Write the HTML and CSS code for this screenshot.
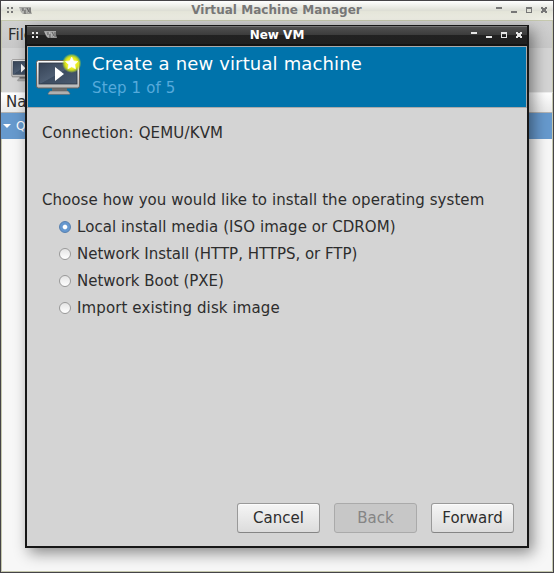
FILE: index.html
```
<!DOCTYPE html>
<html lang="en">
<head>
<meta charset="utf-8">
<title>Virtual Machine Manager</title>
<link rel="stylesheet" href="styles.css">
</head>
<body>
<svg class="defs" width="0" height="0" aria-hidden="true">
  <defs>
    <linearGradient id="bezel" x1="0" y1="0" x2="0" y2="1"><stop offset="0" stop-color="#fff"/><stop offset="1" stop-color="#b8b8b8"/></linearGradient>
    <linearGradient id="screen" x1="0" y1="0" x2="1" y2="1"><stop offset="0" stop-color="#354255"/><stop offset=".5" stop-color="#4e5e73"/><stop offset=".52" stop-color="#3c4c61"/><stop offset="1" stop-color="#4b5b70"/></linearGradient>
    <radialGradient id="glow"><stop offset="0" stop-color="#fff36a"/><stop offset=".6" stop-color="#e8ec15"/><stop offset=".78" stop-color="#c8dc20" stop-opacity=".8"/><stop offset="1" stop-color="#9cca40" stop-opacity="0"/></radialGradient>
    <symbol id="vm" viewBox="0 0 48 44">
      <path d="M17 35h15v3H17z" fill="#6d6d6d"/>
      <path d="M15 38h18l2 2.500q0 1-1 1H14q-1 0-1-1z" fill="#b0b0b0" stroke="#666" stroke-width=".6"/>
      <rect x="1.500" y="7.500" width="43" height="27.500" rx="2" fill="url(#bezel)" stroke="#66625f"/>
      <rect x="4" y="10" width="38" height="21" fill="url(#screen)" stroke="#2d3745" stroke-width=".8"/>
      <path d="M20 14v14l9-7z" fill="#fff"/>
      <circle cx="36.700" cy="10.300" r="9.800" fill="url(#glow)"/>
      <path d="M36.700 4l1.900 3.900 4.300.6-3.100 3 .7 4.300-3.800-2-3.800 2 .7-4.300-3.100-3 4.300-.6z" fill="#fff" stroke="#fff" stroke-width=".6"/>
    </symbol>
    <symbol id="logo" viewBox="0 0 14 8">
      <path d="M0 0h12v4l1 3H4L2 5z" fill="currentColor" opacity=".6"/>
      <path d="M1 1l3 5 1-5 2 5 1-4 2 4 1-3" fill="none" stroke="#ddd" stroke-width=".7" opacity=".5"/>
      <path d="M4 1v3M8 1l2 4M11 1v5M6 3v4" stroke="#555" stroke-width=".9"/>
    </symbol>
    <symbol id="dots" viewBox="0 0 7 6"><path d="M0 0h2v2H0zM4 0h2v2H4zM0 4h2v2H0zM4 4h2v2H4z" fill="currentColor"/></symbol>
    <symbol id="controls" viewBox="0 0 52 7">
      <path d="M0 0h6v2H0zM15 4h6v2h-6zM30 0h6v6h-6zM31 2v3h4V2z" fill="currentColor" fill-rule="evenodd"/>
      <path d="M45 0h2v1h2V0h2v2h-1v2h1v2h-2V5h-2v1h-2V4h1V2h-1z" fill="currentColor"/>
    </symbol>
  </defs>
</svg>
<div class="manager">
  <header class="titlebar">
    <svg class="dots"><use href="#dots"/></svg><svg class="logo"><use href="#logo"/></svg>
    <h1 class="title">Virtual Machine Manager</h1>
    <svg class="controls"><use href="#controls"/></svg>
  </header>
  <nav class="menu">File</nav>
  <div class="toolbar"><svg class="tool-icon"><use href="#vm"/></svg></div>
  <div class="list-head">Name</div>
  <div class="list-row"><svg width="8" height="4"><path d="M0 0h8L4 4z" fill="#fff"/></svg><span>Q</span></div>
  <div class="list-body"></div>
</div>

<section class="dialog">
  <header class="dialog-titlebar">
    <svg class="dots"><use href="#dots"/></svg><svg class="logo"><use href="#logo"/></svg>
    <h2 class="dialog-title">New VM</h2>
    <svg class="controls"><use href="#controls"/></svg>
  </header>
  <div class="banner">
    <svg class="banner-icon"><use href="#vm"/></svg>
    <div><div class="heading">Create a new virtual machine</div><div class="step">Step 1 of 5</div></div>
  </div>
  <div class="content">
    <p class="connection">Connection: <span>QEMU/KVM</span></p>
    <p class="question">Choose how you would like to install the operating system</p>
    <div class="options">
      <div class="option"><i class="radio checked"></i><span class="local">Local install media (ISO image or CDROM)</span></div>
      <div class="option"><i class="radio"></i><span class="network">Network Install (HTTP, HTTPS, or FTP)</span></div>
      <div class="option"><i class="radio"></i><span class="network">Network Boot (PXE)</span></div>
      <div class="option"><i class="radio"></i><span class="import">Import existing disk image</span></div>
    </div>
    <div class="actions">
      <button>Cancel</button><button disabled>Back</button><button>Forward</button>
    </div>
  </div>
</section>
</body>
</html>
```

FILE: styles.css
```
* { box-sizing: border-box; }
body { margin: 0; width: 554px; height: 573px; overflow: hidden; position: relative; font: 15px/18px "DejaVu Sans", sans-serif; color: #2d2d2d; }
h1, h2, p { margin: 0; }
.defs { position: absolute; }
.manager { width: 554px; height: 573px; border: 1px solid #454347; display: flex; flex-direction: column; background: #f7f7f7; }
.titlebar, .dialog-titlebar { display: flex; align-items: center; flex: none; }
.titlebar { height: 20px; padding: 0 5px 0 6px; background: linear-gradient(#fff, #dedfd6 50%, #e3e4d8 51%, #efefe6); border-bottom: 1px solid #c5c8ad; color: #777; }
.dots { width: 7px; height: 6px; }
.titlebar .dots { margin-top: -1px; }
.logo { width: 14px; height: 8px; margin-left: 5px; }
.controls { width: 52px; height: 7px; }
.titlebar .controls { margin-top: -1px; }
.title, .dialog-title { flex: 1; text-align: center; font-size: 12px; line-height: 18px; font-weight: bold; position: relative; top: -1px; }
.title { padding-left: 24px; letter-spacing: .04px; }
.menu { height: 27px; flex: none; padding: 5px 6px; background: linear-gradient(#d0d0d0, #c8c8c8); border-left: 1px solid #c5c8ad; }
.toolbar { height: 44px; flex: none; background: #d4d4d4; padding: 7px 9px; border-left: 1px solid #c5c8ad; }
.tool-icon { width: 24px; height: 22px; display: block; transform: scaleY(1.25); transform-origin: top; }
.list-head { height: 21px; flex: none; padding: 0 5px; background: linear-gradient(#fff, #e9e9e9); border-top: 1px solid #eee; border-bottom: 1px solid #b2b2b2; }
.list-row { height: 26px; flex: none; background: #6699cd; color: #fff; display: flex; align-items: center; gap: 5px; padding-left: 2px; font-size: 12px; }
.list-body { flex: 1; }
.manager > :not(.titlebar) { border-right: 1px solid #c5c8ad; }
.list-body { border-left: 1px solid #c5c8ad; border-bottom: 1px solid #c5c8ad; }
.dialog { position: absolute; left: 25px; top: 25px; width: 504px; height: 523px; border: solid #171717; border-width: 1px 2px 2px; background: #d4d4d4; box-shadow: 4px 5px 14px rgba(0,0,0,.45); display: flex; flex-direction: column; }
.dialog-titlebar { height: 20px; padding: 0 4px 0 5px; background: linear-gradient(#777 0, #777 1px, #505050 1px, #3b3b3b 45%, #212121 46%, #202020 88%, #141414 89%); color: #e5e5e5; }
.dialog-titlebar .dots { margin-top: -2px; }
.dialog-titlebar .logo { margin-top: -3px; }
.dialog-titlebar .controls { margin-top: -1px; }
.dialog-title { color: #fff; padding-left: 25px; }
.banner { height: 62px; flex: none; border: 1px solid #aaa; background: #0073ab; display: flex; }
.banner-icon { width: 48px; height: 44px; margin: 6px 9px 0 7px; }
.heading { color: #fff; font-size: 18px; line-height: 22px; margin-top: 6px; letter-spacing: .15px; }
.step { color: #56aadb; font-size: 15px; line-height: 18px; margin-top: 4px; letter-spacing: .13px; }
.content { flex: 1; display: flex; flex-direction: column; padding: 16px 13px 13px 15px; }
.connection { letter-spacing: .16px; }
.question { margin-top: 49px; white-space: nowrap; letter-spacing: .07px; }
.options { margin: 4px 0 0 17px; }
.option { display: flex; align-items: center; height: 27px; gap: 6px; }
.option span { padding-top: 1px; }
.local { letter-spacing: .07px; }
.network { letter-spacing: -.02px; }
.import { letter-spacing: .11px; }
.radio { width: 12px; height: 12px; border: 1px solid #999; border-radius: 50%; background: linear-gradient(#e4e4e4, #fff); }
.checked { border-color: #557faf; background: radial-gradient(circle, #fff 0 1.8px, #6698cf 2.8px); }
.actions { display: flex; justify-content: flex-end; gap: 14px; margin-top: auto; }
button { width: 83px; height: 30px; padding: 0; font: inherit; color: #2d2d2d; border: 1px solid #999; border-bottom-color: #858585; border-radius: 3px; background: linear-gradient(#f5f5f5, #dcdcdc); box-shadow: inset 0 1px #fff9; }
button:disabled { color: #858585; background: #c7c7c7; border-color: #aaa; box-shadow: none; }
```
